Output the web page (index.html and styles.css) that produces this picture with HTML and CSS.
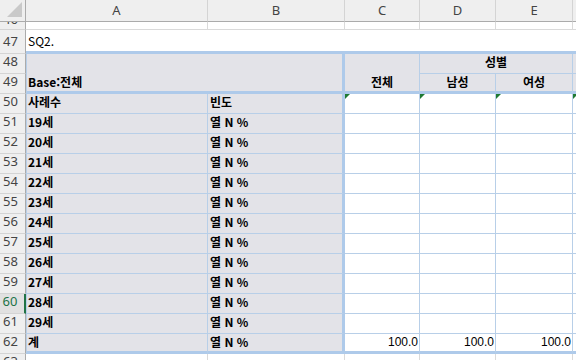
FILE: index.html
```html
<!DOCTYPE html>
<html lang="ko">

<head>
    <meta charset="UTF-8">
    <meta name="viewport" content="width=device-width, initial-scale=1.0">
    <title>SQ2. 연령</title>
    <link rel="stylesheet" href="styles.css">
</head>

<body>
    <div class="sheet">
        <!-- column letters -->
        <div class="corner">
            <svg width="25" height="21" viewBox="0 0 25 21"><polygon points="7,17 22,2 22,17" fill="#c9c9c9" /></svg>
        </div>
        <div class="col">A</div>
        <div class="col">B</div>
        <div class="col">C</div>
        <div class="col">D</div>
        <div class="col">E</div>
        <div class="col"></div>

        <!-- 46 -->
        <div class="rh short">46</div>
        <div class="gl"></div><div class="gl"></div><div class="gl"></div><div class="gl"></div><div class="gl"></div><div class="gl"></div>

        <!-- 47 -->
        <div class="rh">47</div>
        <div class="title">SQ2.</div>

        <!-- 48 / 49 -->
        <div class="rh">48</div>
        <div class="base">Base:전체</div>
        <div class="hd tall">전체</div>
        <div class="hd group">성별</div>
        <div class="hd"></div>
        <div class="rh">49</div>
        <div class="hd end">남성</div>
        <div class="hd end">여성</div>
        <div class="hd end"></div>

        <!-- 50 -->
        <div class="rh">50</div>
        <div class="a">사례수</div>
        <div class="b">빈도</div>
        <div class="v flag"></div><div class="v flag"></div><div class="v flag"></div><div class="v flag"></div>

        <div class="rh">51</div>
        <div class="a">19세</div><div class="b">열 N %</div>
        <div class="v"></div><div class="v"></div><div class="v"></div><div class="v"></div>

        <div class="rh">52</div>
        <div class="a">20세</div><div class="b">열 N %</div>
        <div class="v"></div><div class="v"></div><div class="v"></div><div class="v"></div>

        <div class="rh">53</div>
        <div class="a">21세</div><div class="b">열 N %</div>
        <div class="v"></div><div class="v"></div><div class="v"></div><div class="v"></div>

        <div class="rh">54</div>
        <div class="a">22세</div><div class="b">열 N %</div>
        <div class="v"></div><div class="v"></div><div class="v"></div><div class="v"></div>

        <div class="rh">55</div>
        <div class="a">23세</div><div class="b">열 N %</div>
        <div class="v"></div><div class="v"></div><div class="v"></div><div class="v"></div>

        <div class="rh">56</div>
        <div class="a">24세</div><div class="b">열 N %</div>
        <div class="v"></div><div class="v"></div><div class="v"></div><div class="v"></div>

        <div class="rh">57</div>
        <div class="a">25세</div><div class="b">열 N %</div>
        <div class="v"></div><div class="v"></div><div class="v"></div><div class="v"></div>

        <div class="rh">58</div>
        <div class="a">26세</div><div class="b">열 N %</div>
        <div class="v"></div><div class="v"></div><div class="v"></div><div class="v"></div>

        <div class="rh">59</div>
        <div class="a">27세</div><div class="b">열 N %</div>
        <div class="v"></div><div class="v"></div><div class="v"></div><div class="v"></div>

        <div class="rh sel">60</div>
        <div class="a">28세</div><div class="b">열 N %</div>
        <div class="v"></div><div class="v"></div><div class="v"></div><div class="v"></div>

        <div class="rh">61</div>
        <div class="a">29세</div><div class="b">열 N %</div>
        <div class="v"></div><div class="v"></div><div class="v"></div><div class="v"></div>

        <!-- total -->
        <div class="rh">62</div>
        <div class="a end">계</div><div class="b end">열 N %</div>
        <div class="v end">100.0</div><div class="v end">100.0</div><div class="v end">100.0</div><div class="v end"></div>

        <!-- 63 -->
        <div class="rh">63</div>
        <div class="gl"></div><div class="gl"></div><div class="gl"></div><div class="gl"></div><div class="gl"></div><div class="gl"></div>
    </div>
</body>

</html>
```

FILE: styles.css
```css
body {
    margin: 0;
    background: #fff;
    overflow: hidden;
    color: #000;
}

.sheet {
    display: grid;
    grid-template-columns: 26px 182px 137px 75px 76px 77px 10px;
    grid-template-rows: 22px 8px 24px 20px 20px repeat(13, 20px) 20px;
    width: 583px;
    font-family: "Noto Sans CJK KR", sans-serif;
    font-size: 12px;
    line-height: 16px;
}

.sheet > div {
    box-sizing: border-box;
    border-right: 1px solid #dadada;
    border-bottom: 1px solid #dadada;
    overflow: hidden;
    white-space: nowrap;
}

/* headers */
.corner,
.col,
.rh {
    background-color: #efefef;
    font-family: "Noto Sans", sans-serif;
    font-size: 13px;
    color: #444;
}

.corner {
    border-right-color: #ababab !important;
    border-bottom-color: #ababab !important;
}

.corner svg {
    display: block;
}

.col {
    text-align: center;
    line-height: 21px;
    border-right-color: #d4d4d4 !important;
    border-bottom-color: #ababab !important;
}

.sheet > .rh {
    display: flex;
    align-items: flex-end;
    justify-content: center;
    padding: 0 4px 4px 0;
    line-height: 15px;
    overflow: visible;
    border-right-color: #ababab;
    border-bottom-color: #d4d4d4;
}

.sheet > .rh.short {
    padding-bottom: 2px;
    overflow: hidden;
}

.sheet > .rh.sel {
    background-color: #e1e1e1;
    color: #217346;
    border-right: 2px solid #217346;
}

/* plain sheet */
.gl {
    background: #fff;
}

.title {
    grid-column: span 6;
    padding-left: 2px;
    line-height: 21px;
    border-right: none !important;
    border-bottom: 3px solid #aecaea !important;
}

/* table */
.base,
.hd,
.a,
.b {
    background-color: #e3e3e8;
    font-weight: bold;
}

.base,
.hd,
.a,
.b,
.v {
    border-right-color: #b8cfe8 !important;
    border-bottom-color: #b8cfe8 !important;
}

.base {
    grid-column: span 2;
    grid-row: span 2;
    display: flex;
    align-items: flex-end;
    padding: 0 0 1px 1px;
    border-left: 1px solid #b8cfe8;
    border-right: 3px solid #aecaea !important;
    border-bottom: 3px solid #aecaea !important;
}

.hd {
    text-align: center;
}

.hd.tall {
    grid-row: span 2;
    display: flex;
    align-items: flex-end;
    justify-content: center;
    padding-bottom: 1px;
}

.hd.group {
    grid-column: span 2;
}

.a {
    padding-left: 1px;
    border-left: 1px solid #b8cfe8;
}

.b {
    padding-left: 2px;
    border-right: 3px solid #aecaea !important;
}

.v {
    background: #fff;
    text-align: right;
    padding-right: 1px;
    font-family: "Liberation Sans", sans-serif;
}

.end,
.hd.tall {
    border-bottom: 3px solid #aecaea !important;
}

/* error mark */
.flag {
    position: relative;
}

.flag::before {
    content: "";
    position: absolute;
    left: 0;
    top: 0;
    border-top: 5px solid #1f7a34;
    border-right: 5px solid transparent;
}
```
